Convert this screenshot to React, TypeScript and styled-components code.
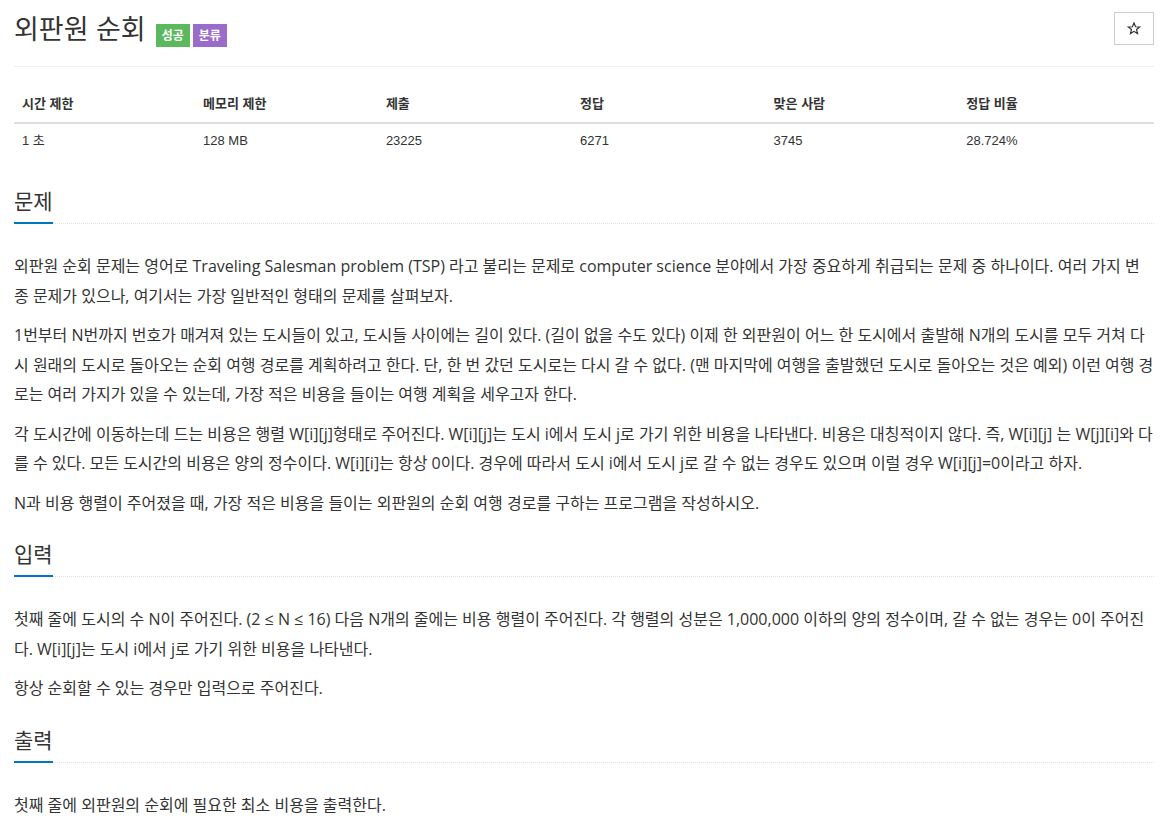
import React from "react";
import styled, { createGlobalStyle } from "styled-components";

const GlobalStyle = createGlobalStyle`
  html, body {
    margin: 0;
    padding: 0;
    background: #fff;
  }
  body {
    font-family: "Liberation Sans", "Noto Sans CJK KR", sans-serif;
    color: #333;
  }
`;

const Page = styled.div`
  width: 1140px;
  margin-left: 14px;
`;

const Header = styled.div`
  display: flex;
  justify-content: space-between;
  align-items: flex-start;
  padding: 12px 0 18px;
  border-bottom: 1px solid #eee;
`;

const Title = styled.h1`
  display: flex;
  align-items: flex-start;
  margin: 0;
  font-size: 27px;
  line-height: 36px;
  font-weight: 400;
  color: #333;
`;

const Badges = styled.span`
  display: flex;
  gap: 3px;
  margin: 12px 0 0 10px;
`;

const Badge = styled.span<{ $color: string }>`
  display: inline-flex;
  align-items: center;
  justify-content: center;
  width: 34px;
  height: 23px;
  background: ${({ $color }) => $color};
  color: #fff;
  font-size: 12px;
  font-weight: 700;
  line-height: 1;
`;

const StarButton = styled.button`
  display: flex;
  align-items: center;
  justify-content: center;
  width: 40px;
  height: 33px;
  padding: 0;
  border: 1px solid #ccc;
  border-radius: 0;
  background: #fff;
  cursor: pointer;
`;

const Table = styled.table`
  width: 100%;
  margin-top: 20px;
  border-collapse: collapse;
  font-size: 13px;
  line-height: 18.6px;
`;

const Th = styled.th<{ $w: number }>`
  width: ${({ $w }) => $w}px;
  padding: 8px;
  text-align: left;
  font-weight: 700;
  border-bottom: 2px solid #ddd;
`;

const Td = styled.td`
  padding: 8px;
  text-align: left;
`;

const Section = styled.section`
  margin-top: 29px;

  & + & {
    margin-top: 22px;
  }
`;

const Headline = styled.div`
  border-bottom: 1px dotted #dde2ea;
  margin-bottom: 28px;
`;

const HeadTitle = styled.h2`
  display: inline-block;
  margin: 0 0 -1px;
  padding-bottom: 5px;
  border-bottom: 2px solid #0076c0;
  font-size: 21px;
  line-height: 30px;
  font-weight: 400;
  color: #333;
`;

const Text = styled.div`
  font-family: "Open Sans", "Noto Sans CJK KR", sans-serif;
  font-size: 16px;
  line-height: 29.5px;
  color: #333;

  p {
    margin: 0 0 10px;
  }
  p:last-child {
    margin-bottom: 0;
  }
`;

const StarIcon = () => (
  <svg width="14" height="13" viewBox="0 0 14 13" fill="none">
    <path
      d="M7 0.9 L8.55 4.75 L12.7 4.95 L9.5 7.55 L10.55 11.6 L7 9.35 L3.45 11.6 L4.5 7.55 L1.3 4.95 L5.45 4.75 Z"
      stroke="#333"
      strokeWidth="1.2"
      strokeLinejoin="miter"
    />
  </svg>
);

const stats = [
  { label: "시간 제한", value: "1 초", w: 182 },
  { label: "메모리 제한", value: "128 MB", w: 183 },
  { label: "제출", value: "23225", w: 194 },
  { label: "정답", value: "6271", w: 194 },
  { label: "맞은 사람", value: "3745", w: 193 },
  { label: "정답 비율", value: "28.724%", w: 194 },
];

const sections: { title: string; paragraphs: string[] }[] = [
  {
    title: "문제",
    paragraphs: [
      "외판원 순회 문제는 영어로 Traveling Salesman problem (TSP) 라고 불리는 문제로 computer science 분야에서 가장 중요하게 취급되는 문제 중 하나이다. 여러 가지 변종 문제가 있으나, 여기서는 가장 일반적인 형태의 문제를 살펴보자.",
      "1번부터 N번까지 번호가 매겨져 있는 도시들이 있고, 도시들 사이에는 길이 있다. (길이 없을 수도 있다) 이제 한 외판원이 어느 한 도시에서 출발해 N개의 도시를 모두 거쳐 다시 원래의 도시로 돌아오는 순회 여행 경로를 계획하려고 한다. 단, 한 번 갔던 도시로는 다시 갈 수 없다. (맨 마지막에 여행을 출발했던 도시로 돌아오는 것은 예외) 이런 여행 경로는 여러 가지가 있을 수 있는데, 가장 적은 비용을 들이는 여행 계획을 세우고자 한다.",
      "각 도시간에 이동하는데 드는 비용은 행렬 W[i][j]형태로 주어진다. W[i][j]는 도시 i에서 도시 j로 가기 위한 비용을 나타낸다. 비용은 대칭적이지 않다. 즉, W[i][j] 는 W[j][i]와 다를 수 있다. 모든 도시간의 비용은 양의 정수이다. W[i][i]는 항상 0이다. 경우에 따라서 도시 i에서 도시 j로 갈 수 없는 경우도 있으며 이럴 경우 W[i][j]=0이라고 하자.",
      "N과 비용 행렬이 주어졌을 때, 가장 적은 비용을 들이는 외판원의 순회 여행 경로를 구하는 프로그램을 작성하시오.",
    ],
  },
  {
    title: "입력",
    paragraphs: [
      "첫째 줄에 도시의 수 N이 주어진다. (2 ≤ N ≤ 16) 다음 N개의 줄에는 비용 행렬이 주어진다. 각 행렬의 성분은 1,000,000 이하의 양의 정수이며, 갈 수 없는 경우는 0이 주어진다. W[i][j]는 도시 i에서 j로 가기 위한 비용을 나타낸다.",
      "항상 순회할 수 있는 경우만 입력으로 주어진다.",
    ],
  },
  {
    title: "출력",
    paragraphs: ["첫째 줄에 외판원의 순회에 필요한 최소 비용을 출력한다."],
  },
];

export default function App() {
  return (
    <Page>
      <GlobalStyle />
      <Header>
        <Title>
          외판원 순회
          <Badges>
            <Badge $color="#5cb85c">성공</Badge>
            <Badge $color="#9b6bcc">분류</Badge>
          </Badges>
        </Title>
        <StarButton aria-label="즐겨찾기">
          <StarIcon />
        </StarButton>
      </Header>

      <Table>
        <thead>
          <tr>
            {stats.map((s) => (
              <Th key={s.label} $w={s.w}>
                {s.label}
              </Th>
            ))}
          </tr>
        </thead>
        <tbody>
          <tr>
            {stats.map((s) => (
              <Td key={s.label}>{s.value}</Td>
            ))}
          </tr>
        </tbody>
      </Table>

      {sections.map((sec) => (
        <Section key={sec.title}>
          <Headline>
            <HeadTitle>{sec.title}</HeadTitle>
          </Headline>
          <Text>
            {sec.paragraphs.map((p, i) => (
              <p key={i}>{p}</p>
            ))}
          </Text>
        </Section>
      ))}
    </Page>
  );
}
